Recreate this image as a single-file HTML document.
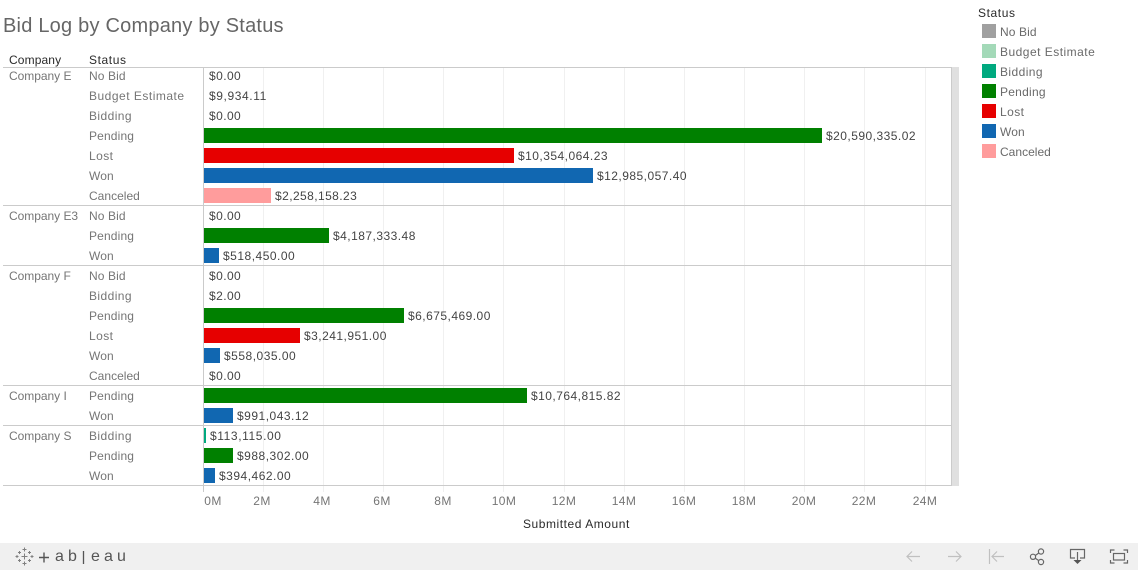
<!DOCTYPE html>
<html><head><meta charset="utf-8"><style>
html,body{margin:0;padding:0;background:#fff}
#p{position:relative;width:1138px;height:570px;overflow:hidden;background:#fff;font-family:"Liberation Sans",sans-serif;font-size:12px;letter-spacing:.42px}
#p div{position:absolute}
.t{white-space:nowrap;line-height:14px;height:14px}
.c{color:#757575}
.n{letter-spacing:-.03px}
.pd{letter-spacing:.15px}
.nb{letter-spacing:.1px}
.cn{letter-spacing:.02px}
.w{letter-spacing:.1px}
.v{color:#444}
.h{color:#2a2a2a}
.a{color:#757575;width:40px;text-align:center;top:494px}
.g{width:1px;top:67px;height:425px;background:#f0f0f0}
.l{height:1px;left:3px;width:949px;background:#cbcbcb}
.b{height:15px;left:204px}
.s{left:982px;width:14px;height:14px}
.k{color:#6a6a6a;left:1000px}
.f{top:550px;font-size:16px;color:#555;letter-spacing:0}
</style></head><body><div id="p">
<div class="t" style="left:3px;top:14px;font-size:20px;line-height:24px;height:24px;color:#666;letter-spacing:.22px">Bid Log by Company by Status</div>

<div class="g" style="left:263px"></div><div class="g" style="left:323px"></div><div class="g" style="left:383px"></div><div class="g" style="left:443px"></div><div class="g" style="left:503px"></div><div class="g" style="left:564px"></div><div class="g" style="left:624px"></div><div class="g" style="left:684px"></div><div class="g" style="left:744px"></div><div class="g" style="left:804px"></div><div class="g" style="left:864px"></div><div class="g" style="left:925px"></div>

<div style="left:952px;top:67px;width:7px;height:419px;background:#e0e0e0"></div>
<div style="left:951px;top:67px;width:1px;height:419px;background:#cbcbcb"></div>
<div style="left:203px;top:67px;width:1px;height:425px;background:#cbcbcb"></div>
<div class="l" style="top:67px"></div><div class="l" style="top:205px"></div><div class="l" style="top:265px"></div><div class="l" style="top:385px"></div><div class="l" style="top:425px"></div><div class="l" style="top:485px"></div>

<div class="t h" style="left:9px;top:53px;letter-spacing:.12px">Company</div><div class="t h" style="left:89px;top:53px;letter-spacing:.6px">Status</div>

<div class="t c n" style="left:9px;top:69px">Company E</div>
<div class="t c n" style="left:9px;top:209px">Company E3</div>
<div class="t c n" style="left:9px;top:269px">Company F</div>
<div class="t c n" style="left:9px;top:389px">Company I</div>
<div class="t c n" style="left:9px;top:429px">Company S</div>

<div class="t c nb" style="left:89px;top:69px">No Bid</div>
<div class="t c" style="left:89px;top:89px;letter-spacing:.5px">Budget Estimate</div>
<div class="t c" style="left:89px;top:109px">Bidding</div>
<div class="t c pd" style="left:89px;top:129px">Pending</div>
<div class="t c" style="left:89px;top:149px">Lost</div>
<div class="t c w" style="left:89px;top:169px">Won</div>
<div class="t c cn" style="left:89px;top:189px">Canceled</div>
<div class="t c nb" style="left:89px;top:209px">No Bid</div>
<div class="t c pd" style="left:89px;top:229px">Pending</div>
<div class="t c w" style="left:89px;top:249px">Won</div>
<div class="t c nb" style="left:89px;top:269px">No Bid</div>
<div class="t c" style="left:89px;top:289px">Bidding</div>
<div class="t c pd" style="left:89px;top:309px">Pending</div>
<div class="t c" style="left:89px;top:329px">Lost</div>
<div class="t c w" style="left:89px;top:349px">Won</div>
<div class="t c cn" style="left:89px;top:369px">Canceled</div>
<div class="t c pd" style="left:89px;top:389px">Pending</div>
<div class="t c w" style="left:89px;top:409px">Won</div>
<div class="t c" style="left:89px;top:429px">Bidding</div>
<div class="t c pd" style="left:89px;top:449px">Pending</div>
<div class="t c w" style="left:89px;top:469px">Won</div>

<div class="b" style="top:128px;width:618px;background:#008000"></div>
<div class="b" style="top:148px;width:310px;background:#e60000"></div>
<div class="b" style="top:168px;width:389px;background:#1167b1"></div>
<div class="b" style="top:188px;width:67px;background:#ff9c9c"></div>
<div class="b" style="top:228px;width:125px;background:#008000"></div>
<div class="b" style="top:248px;width:15px;background:#1167b1"></div>
<div class="b" style="top:308px;width:200px;background:#008000"></div>
<div class="b" style="top:328px;width:96px;background:#e60000"></div>
<div class="b" style="top:348px;width:16px;background:#1167b1"></div>
<div class="b" style="top:388px;width:323px;background:#008000"></div>
<div class="b" style="top:408px;width:29px;background:#1167b1"></div>
<div class="b" style="top:428px;width:2px;background:#00a97f"></div>
<div class="b" style="top:448px;width:29px;background:#008000"></div>
<div class="b" style="top:468px;width:11px;background:#1167b1"></div>

<div class="t v" style="left:209px;top:69px">$0.00</div>
<div class="t v" style="left:209px;top:89px;letter-spacing:.6px">$9,934.11</div>
<div class="t v" style="left:209px;top:109px">$0.00</div>
<div class="t v" style="left:826px;top:129px;letter-spacing:.47px">$20,590,335.02</div>
<div class="t v" style="left:518px;top:149px;letter-spacing:.47px">$10,354,064.23</div>
<div class="t v" style="left:597px;top:169px;letter-spacing:.47px">$12,985,057.40</div>
<div class="t v" style="left:275px;top:189px">$2,258,158.23</div>
<div class="t v" style="left:209px;top:209px">$0.00</div>
<div class="t v" style="left:333px;top:229px;letter-spacing:.47px">$4,187,333.48</div>
<div class="t v" style="left:223px;top:249px;letter-spacing:.5px">$518,450.00</div>
<div class="t v" style="left:209px;top:269px">$0.00</div>
<div class="t v" style="left:209px;top:289px">$2.00</div>
<div class="t v" style="left:408px;top:309px;letter-spacing:.47px">$6,675,469.00</div>
<div class="t v" style="left:304px;top:329px;letter-spacing:.47px">$3,241,951.00</div>
<div class="t v" style="left:224px;top:349px;letter-spacing:.5px">$558,035.00</div>
<div class="t v" style="left:209px;top:369px">$0.00</div>
<div class="t v" style="left:531px;top:389px;letter-spacing:.47px">$10,764,815.82</div>
<div class="t v" style="left:237px;top:409px;letter-spacing:.5px">$991,043.12</div>
<div class="t v" style="left:210px;top:429px;letter-spacing:.6px">$113,115.00</div>
<div class="t v" style="left:237px;top:449px;letter-spacing:.5px">$988,302.00</div>
<div class="t v" style="left:219px;top:469px;letter-spacing:.5px">$394,462.00</div>

<div class="t a" style="left:193px">0M</div><div class="t a" style="left:242px">2M</div><div class="t a" style="left:302px">4M</div><div class="t a" style="left:362px">6M</div><div class="t a" style="left:423px">8M</div><div class="t a" style="left:484px">10M</div><div class="t a" style="left:544px">12M</div><div class="t a" style="left:604px">14M</div><div class="t a" style="left:664px">16M</div><div class="t a" style="left:724px">18M</div><div class="t a" style="left:784px">20M</div><div class="t a" style="left:844px">22M</div><div class="t a" style="left:905px">24M</div>
<div class="t h" style="left:523px;top:517px;letter-spacing:.55px">Submitted Amount</div>

<div class="t h" style="left:978px;top:6px;letter-spacing:.6px">Status</div>
<div class="s" style="top:24px;background:#a0a0a0"></div><div class="t k" style="top:25px;letter-spacing:.1px">No Bid</div>
<div class="s" style="top:44px;background:#a3d9b8"></div><div class="t k" style="top:45px;letter-spacing:.48px">Budget Estimate</div>
<div class="s" style="top:64px;background:#00a97f"></div><div class="t k" style="top:65px">Bidding</div>
<div class="s" style="top:84px;background:#008000"></div><div class="t k" style="top:85px;letter-spacing:.25px">Pending</div>
<div class="s" style="top:104px;background:#e60000"></div><div class="t k" style="top:105px">Lost</div>
<div class="s" style="top:124px;background:#1167b1"></div><div class="t k" style="top:125px;letter-spacing:.1px">Won</div>
<div class="s" style="top:144px;background:#ff9c9c"></div><div class="t k" style="top:145px;letter-spacing:.02px">Canceled</div>

<div style="left:0;top:543px;width:1138px;height:27px;background:#f0f0f0"></div>
<svg style="position:absolute;left:0;top:543px" width="1138" height="27" viewBox="0 0 1138 27" fill="none">
<g stroke="#808080" stroke-width="1">
<path d="M24.500 10.500v6M21.500 13.500h6"/>
<path d="M24.500 4.500v4M22.500 6.500h4M24.500 18.500v4M22.500 20.500h4"/>
<path d="M17 12v3M15.500 13.500h3M32 12v3M30.500 13.500h3"/>
<path d="M19.500 8v3M18 9.500h3M29.500 8v3M28 9.500h3M19.500 16v3M18 17.500h3M29.500 16v3M28 17.500h3"/>
</g>
<g stroke="#555" stroke-width="1.400"><path d="M39 14.500h10M44 9.500v10"/></g>
<path d="M83.500 8v13" stroke="#555" stroke-width="1.300"/>
<g stroke="#c0c0c0" stroke-width="1.200">
<path d="M907 13.500h13M912 8.500l-5 5 5 5"/>
<path d="M948 13.500h13M956 8.500l5 5-5 5"/>
<path d="M989.500 6v15M992 13.500h12M997 8.500l-5 5 5 5"/>
</g>
<g stroke="#666" stroke-width="1.200">
<circle cx="1041" cy="8.500" r="2.600"/><circle cx="1041" cy="19" r="2.600"/><circle cx="1033" cy="13.800" r="2.600"/>
<path d="M1035.300 12.500l3.500-2.500M1035.300 15.200l3.500 2.400"/>
<path d="M1075 15h-4.500V6.500h14V15H1080M1077.500 9v9"/>
</g>
<path d="M1073.500 17h8l-4 4z" fill="#555"/>
<g stroke="#666" stroke-width="1.200">
<path d="M1110.500 10V7h4M1123.500 7h4v3M1127.500 17v3h-4M1114.500 20h-4v-3"/>
<rect x="1113.500" y="10.500" width="11" height="6.500"/>
</g>
</svg>
<div class="t f" style="left:55px">a</div>
<div class="t f" style="left:68px">b</div>
<div class="t f" style="left:91px">e</div>
<div class="t f" style="left:104px">a</div>
<div class="t f" style="left:117px">u</div>
</div></body></html>
